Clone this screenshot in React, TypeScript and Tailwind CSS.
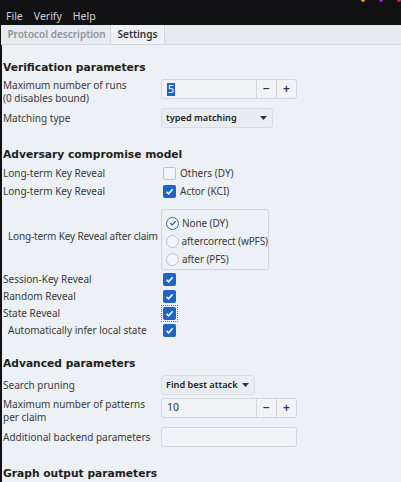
import React from 'react';

const body = { fontFamily: '"Noto Sans", "DejaVu Sans", sans-serif' };
const head = { fontFamily: '"DejaVu Sans", "Noto Sans", sans-serif' };

function Heading({ children, className = '' }: { children: React.ReactNode; className?: string }) {
  return (
    <div style={head} className={`whitespace-nowrap text-[10.7px] font-bold text-[#1e1e1e] leading-[16px] ${className}`}>
      {children}
    </div>
  );
}

function Check({ checked, focus }: { checked?: boolean; focus?: boolean }) {
  const box = checked ? (
    <span className="flex h-[13px] w-[13px] items-center justify-center rounded-[2px] bg-[#1c64c8]">
      <svg width="9" height="9" viewBox="0 0 9 9">
        <path d="M1.5 4.8 L3.6 6.8 L7.6 2.2" fill="none" stroke="white" strokeWidth="1.6" />
      </svg>
    </span>
  ) : (
    <span className="h-[13px] w-[13px] rounded-[2px] border border-[#c0c4ca] bg-[#f3f5f8]" />
  );
  return (
    <span className={`flex h-[17px] w-[17px] items-center justify-center ${focus ? 'border border-dotted border-[#777]' : ''}`}>
      {box}
    </span>
  );
}

function Radio({ checked }: { checked?: boolean }) {
  return checked ? (
    <span className="flex h-[13px] w-[13px] items-center justify-center rounded-full border-[1.5px] border-[#1c64c8] bg-white">
      <svg width="8" height="8" viewBox="0 0 8 8">
        <path d="M1.3 4.1 L3.2 5.9 L6.6 2.1" fill="none" stroke="#1c64c8" strokeWidth="1.4" />
      </svg>
    </span>
  ) : (
    <span className="h-[13px] w-[13px] rounded-full border border-[#c0c4ca] bg-[#f3f5f8]" />
  );
}

function SpinBox({ value, selected }: { value: string; selected?: boolean }) {
  return (
    <div className="flex h-[20px] w-[136px] rounded-[3px] border border-[#d3d7dc] bg-[#f1f3f6]">
      <div className="flex flex-1 items-center pl-[5px] text-[10.5px] text-[#2e3436]">
        {selected ? <span className="bg-[#1c64c8] px-[1px] leading-[13px] text-white">{value}</span> : value}
      </div>
      <div className="flex w-[20px] items-center justify-center border-l border-[#d3d7dc] text-[12px] font-semibold text-[#2e3436]">−</div>
      <div className="flex w-[20px] items-center justify-center border-l border-[#d3d7dc] text-[12px] font-semibold text-[#2e3436]">+</div>
    </div>
  );
}

function Dropdown({ label, width }: { label: string; width: string }) {
  return (
    <div className={`flex h-[20px] ${width} items-center justify-between whitespace-nowrap rounded-[3px] border border-[#d9dde2] bg-[#e9ecf0] pl-[4px] pr-[5px] text-[9.2px] font-semibold text-[#222]`}>
      <span>{label}</span>
      <svg width="7" height="4" viewBox="0 0 7 4" className="ml-[3px]">
        <path d="M0 0 L7 0 L3.5 4 Z" fill="#333" />
      </svg>
    </div>
  );
}

function CheckRow({ label, checked, focus, indent, text }: { label: string; checked?: boolean; focus?: boolean; indent?: boolean; text?: string }) {
  return (
    <div className="flex h-[17px] items-center">
      <div className={`w-[158px] ${indent ? 'pl-[5px]' : ''}`}>{label}</div>
      <Check checked={checked} focus={focus} />
      {text && <span className="ml-[2px]">{text}</span>}
    </div>
  );
}

export default function App() {
  return (
    <div style={body} className="h-[482px] w-[401px] overflow-hidden whitespace-nowrap bg-[#111114] text-[10px] text-[#333]">
      <div className="relative h-[25px]">
        <span className="absolute left-[361px] top-[-2px] h-[4px] w-[4px] rounded-full bg-[#e6a300]" />
        <span className="absolute left-[379px] top-[-2px] h-[4px] w-[4px] rounded-full bg-[#a020d0]" />
        <span className="absolute left-[397px] top-[-2px] h-[4px] w-[4px] rounded-full bg-[#e02030]" />
        <div className="flex gap-[11px] pl-[6px] pt-[9px] text-[10.5px] leading-[14px] text-[#cfd2d6]">
          <span>File</span>
          <span>Verify</span>
          <span>Help</span>
        </div>
      </div>
      <div className="ml-[1px] flex h-[20px] border-b border-[#d2d6db] bg-[#e7ebf1] pl-[2px] text-[10px] font-semibold">
        <div className="flex w-[107px] items-center justify-center text-[#8f9397]">Protocol description</div>
        <div className="flex w-[55px] items-center justify-center border-x border-[#d2d6db] bg-[#eef1f6] text-[#2e3436]">Settings</div>
      </div>
      <div className="ml-[2px] h-[437px] bg-[#edf0f4] pl-[1px] pt-[15px] text-[#3a3a3a]">
        <Heading>Verification parameters</Heading>
        <div className="mt-[2px] flex h-[22px] items-start">
          <div className="w-[158px] pt-[1px] leading-[13px]">
            Maximum number of runs
            <br />
            (0 disables bound)
          </div>
          <div className="pt-[1px]">
            <SpinBox value="5" selected />
          </div>
        </div>
        <div className="mt-[8px] flex h-[20px] items-center">
          <div className="w-[158px]">Matching type</div>
          <Dropdown label="typed matching" width="w-[112px]" />
        </div>
        <Heading className="mt-[19px]">Adversary compromise model</Heading>
        <div className="mt-[2px]">
          <CheckRow label="Long-term Key Reveal" text="Others (DY)" />
          <div className="mt-[1px]">
            <CheckRow label="Long-term Key Reveal" checked text="Actor (KCI)" />
          </div>
        </div>
        <div className="mt-[9px] flex h-[61px] items-center">
          <div className="w-[158px] pb-[7px] pl-[5px] tracking-[-0.15px]">Long-term Key Reveal after claim</div>
          <div className="flex h-[61px] w-[108px] flex-col justify-center rounded-[2px] border border-[#d3d7dc] pl-[4px] pt-[3px] tracking-[-0.1px]">
            {[
              ['None (DY)', true],
              ['aftercorrect (wPFS)', false],
              ['after (PFS)', false],
            ].map(([l, c]) => (
              <div key={l as string} className="flex h-[18px] items-center gap-[3px]">
                <Radio checked={c as boolean} />
                <span>{l}</span>
              </div>
            ))}
          </div>
        </div>
        <div className="mt-[1px]">
          <CheckRow label="Session-Key Reveal" checked />
          <CheckRow label="Random Reveal" checked />
          <CheckRow label="State Reveal" checked focus />
          <CheckRow label="Automatically infer local state" checked indent />
        </div>
        <Heading className="mt-[17px]">Advanced parameters</Heading>
        <div className="mt-[3px] flex h-[20px] items-center">
          <div className="w-[158px]">Search pruning</div>
          <Dropdown label="Find best attack" width="w-[94px]" />
        </div>
        <div className="mt-[3px] flex h-[22px] items-start">
          <div className="w-[158px] leading-[13px]">
            Maximum number of patterns
            <br />
            per claim
          </div>
          <SpinBox value="10" />
        </div>
        <div className="mt-[7px] flex h-[20px] items-center">
          <div className="w-[158px]">Additional backend parameters</div>
          <div className="h-[20px] w-[136px] rounded-[3px] border border-[#d3d7dc] bg-[#f1f3f6]" />
        </div>
        <Heading className="mt-[19px]">Graph output parameters</Heading>
      </div>
    </div>
  );
}
